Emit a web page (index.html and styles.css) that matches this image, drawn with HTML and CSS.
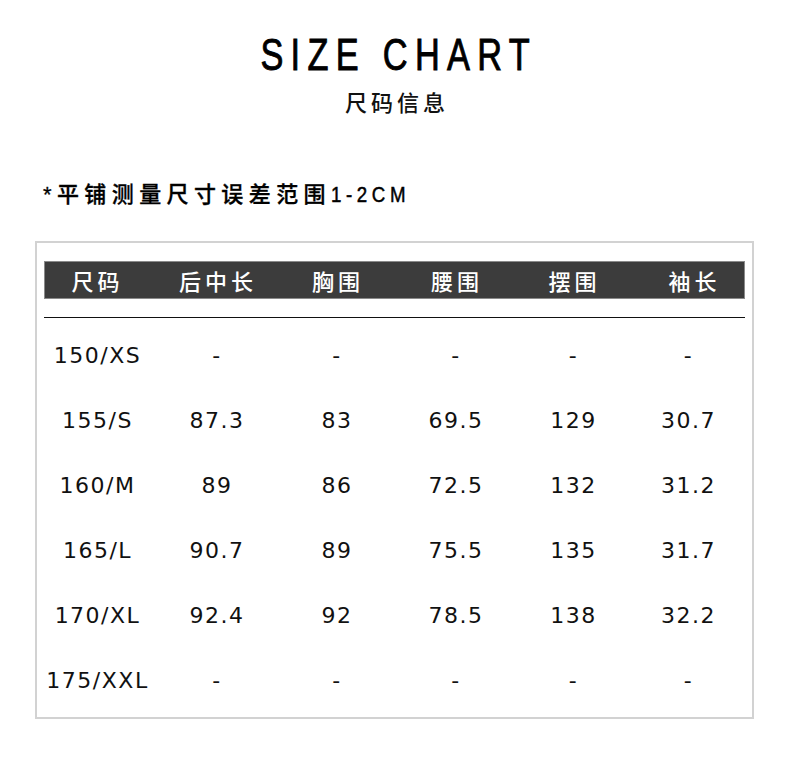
FILE: index.html
```html
<!DOCTYPE html>
<html lang="zh">
<head>
<meta charset="utf-8">
<link rel="stylesheet" href="styles.css">
</head>
<body>
<div class="page">
  <header class="head">
    <h1 class="title"><span class="title-text">SIZE CHART</span></h1>
    <p class="subtitle">尺码信息</p>
  </header>
  <p class="note">*平铺测量尺寸误差范围<span class="cond">1-2CM</span></p>
  <section class="box">
    <div class="thead">
      <span>尺码</span><span>后中长</span><span>胸围</span><span>腰围</span><span>摆围</span><span>袖长</span>
    </div>
    <div class="rule"></div>
    <div class="body">
      <div class="row"><span>150/XS</span><span>-</span><span>-</span><span>-</span><span>-</span><span>-</span></div>
      <div class="row"><span>155/S</span><span>87.3</span><span>83</span><span>69.5</span><span>129</span><span>30.7</span></div>
      <div class="row"><span>160/M</span><span>89</span><span>86</span><span>72.5</span><span>132</span><span>31.2</span></div>
      <div class="row"><span>165/L</span><span>90.7</span><span>89</span><span>75.5</span><span>135</span><span>31.7</span></div>
      <div class="row"><span>170/XL</span><span>92.4</span><span>92</span><span>78.5</span><span>138</span><span>32.2</span></div>
      <div class="row"><span>175/XXL</span><span>-</span><span>-</span><span>-</span><span>-</span><span>-</span></div>
    </div>
  </section>
</div>
</body>
</html>
```
FILE: styles.css
```css
html, body {
  margin: 0;
  padding: 0;
  background: #ffffff;
}
.page {
  width: 790px;
  height: 772px;
  font-family: "DejaVu Sans", "Noto Sans CJK SC", sans-serif;
  color: #111;
}
.head {
  padding-top: 30px;
  text-align: center;
}
.title {
  margin: 0;
  font-family: "Liberation Sans", Arial, sans-serif;
  font-weight: normal;
  font-size: 44px;
  line-height: 50px;
  color: #000;
}
.title-text {
  display: inline-block;
  letter-spacing: 9.4px;
  padding-left: 9.4px;
  -webkit-text-stroke: 0.9px #000;
  transform: scaleX(0.78);
  transform-origin: center;
}
.subtitle {
  margin: 6px 0 0;
  font-family: "Noto Sans CJK SC", sans-serif;
  font-weight: 500;
  font-size: 22px;
  line-height: 30px;
  letter-spacing: 4px;
  padding-left: 4px;
}
.note {
  margin: 64px 0 0 43px;
  font-family: "Liberation Sans", "Noto Sans CJK SC", sans-serif;
  font-weight: 500;
  font-size: 22px;
  line-height: 30px;
  letter-spacing: 5.4px;
  color: #000;
  -webkit-text-stroke: 0.3px #000;
}
.cond {
  display: inline-block;
  font-weight: normal;
  -webkit-text-stroke: 0.5px #000;
  transform: scaleX(0.85);
  transform-origin: left center;
}
.box {
  margin: 31px 0 0 35px;
  width: 701px;
  height: 456px;
  border: 2px solid #d2d2d2;
  padding: 18px 7px 0;
}
.thead,
.row {
  display: grid;
  grid-template-columns: 113px 120px 120px 118px 117px 113px;
  align-items: center;
  text-align: center;
}
.thead {
  height: 36px;
  background: #3c3c3c;
  border: 1px solid #8a8a8a;
  color: #fff;
  font-family: "Noto Sans CJK SC", sans-serif;
  font-weight: 500;
  font-size: 22px;
  line-height: 34px;
  letter-spacing: 4px;
}
.thead span:first-child { margin-right: 8px; }
.thead span:last-child { margin-left: 10px; }
.rule {
  margin-top: 18px;
  height: 1px;
  background: #111;
}
.body {
  padding-top: 5px;
}
.row {
  height: 65px;
  font-size: 22px;
  letter-spacing: 1.5px;
}
.row span:first-child { margin-right: 6px; }
```
